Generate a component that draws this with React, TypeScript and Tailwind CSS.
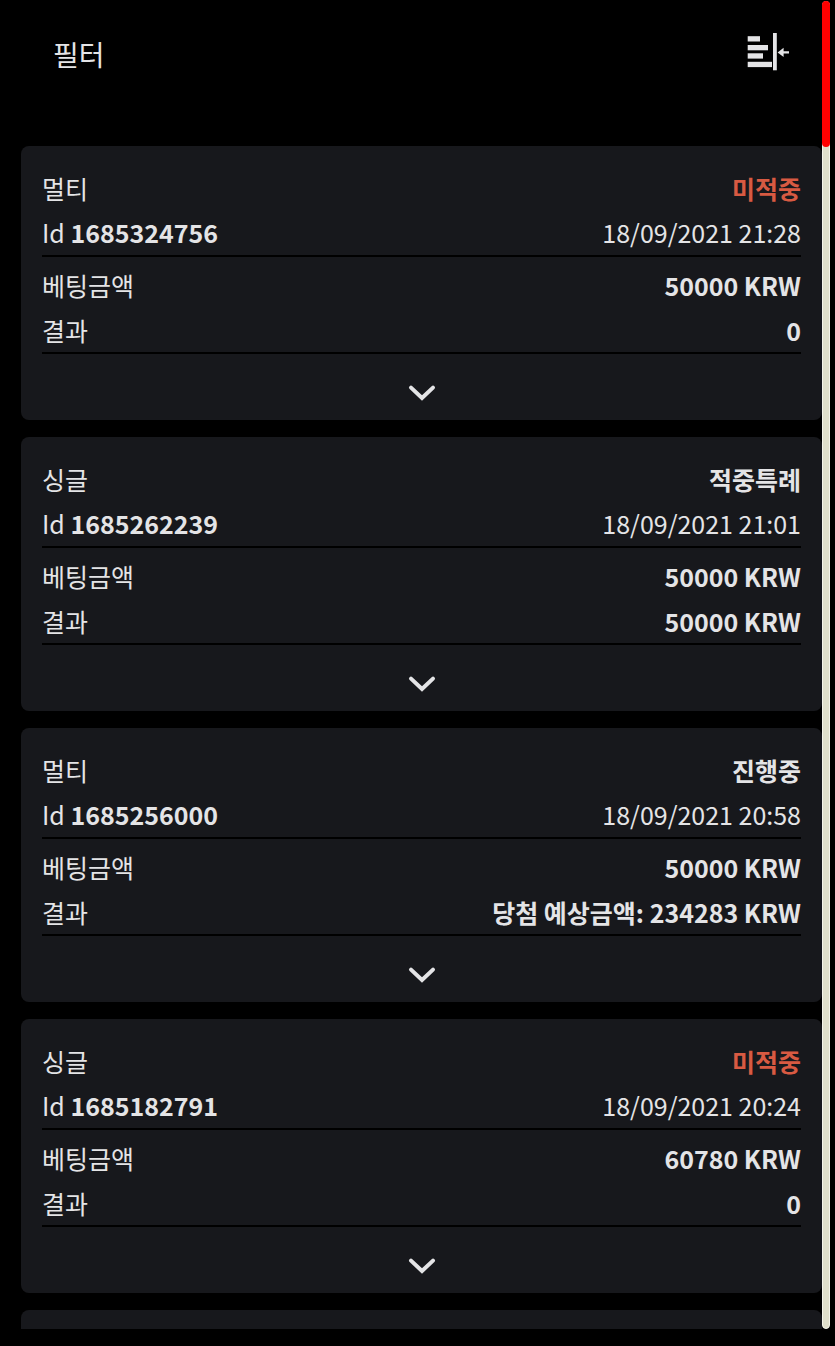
import { useState } from 'react';
import clsx from 'clsx';

type Bet = {
  id: string;
  type: string;
  status: string;
  lost?: boolean;
  date: string;
  stake: string;
  result: string;
};

const bets: Bet[] = [
  { id: '1685324756', type: '멀티', status: '미적중', lost: true, date: '18/09/2021 21:28', stake: '50000 KRW', result: '0' },
  { id: '1685262239', type: '싱글', status: '적중특례', date: '18/09/2021 21:01', stake: '50000 KRW', result: '50000 KRW' },
  { id: '1685256000', type: '멀티', status: '진행중', date: '18/09/2021 20:58', stake: '50000 KRW', result: '당첨 예상금액: 234283 KRW' },
  { id: '1685182791', type: '싱글', status: '미적중', lost: true, date: '18/09/2021 20:24', stake: '60780 KRW', result: '0' },
];

function CollapseIcon() {
  return (
    <svg width="42" height="38" viewBox="0 0 42 38" fill="currentColor" aria-hidden="true">
      <rect x="0.7" y="3.2" width="12.3" height="5.3" />
      <rect x="0.7" y="12" width="20.3" height="5.3" />
      <rect x="0.7" y="20.3" width="15.3" height="5.3" />
      <rect x="0.7" y="28.8" width="24.3" height="5.3" />
      <rect x="26" y="0" width="3.8" height="37.3" />
      <path d="M30.6 19.4 36.6 14.8V18.3H42V20.5H36.6V24Z" />
    </svg>
  );
}

function ChevronIcon() {
  return (
    <svg width="28" height="18" viewBox="0 0 28 18" fill="none" aria-hidden="true">
      <path d="M3 3.6 14 14 25 3.6" stroke="currentColor" strokeWidth="4" strokeLinecap="round" />
    </svg>
  );
}

function BetCard({ bet }: { bet: Bet }) {
  const [open, setOpen] = useState(false);

  return (
    <article className="rounded-lg bg-[#17181c] px-[21px] pt-5">
      <div className="border-b-2 border-black pb-px">
        <div className="flex justify-between">
          <span>{bet.type}</span>
          <strong className={clsx('font-bold', bet.lost && 'text-[#d85a42]')}>{bet.status}</strong>
        </div>
        <div className="flex justify-between">
          <span>
            Id <strong className="font-bold">{bet.id}</strong>
          </span>
          <time>{bet.date}</time>
        </div>
      </div>
      <dl className="flex flex-col gap-px border-b-2 border-black pt-1.5">
        <div className="flex justify-between">
          <dt>베팅금액</dt>
          <dd className="font-bold">{bet.stake}</dd>
        </div>
        <div className="flex justify-between">
          <dt>결과</dt>
          <dd className="font-bold">{bet.result}</dd>
        </div>
      </dl>
      <button
        type="button"
        aria-label="상세 보기"
        aria-expanded={open}
        onClick={() => setOpen(!open)}
        className="flex h-[66px] w-full items-center justify-center pt-3"
      >
        <span className={clsx(open && 'rotate-180')}>
          <ChevronIcon />
        </span>
      </button>
    </article>
  );
}

export default function App() {
  return (
    <div className="flex h-screen bg-black pr-[5px] pb-[17px] pl-[21px] font-['Noto_Sans_CJK_KR',sans-serif] text-[25px] leading-[44px] text-[#e4e4e6]">
      <main className="min-w-0 flex-1 overflow-y-auto [scrollbar-width:none]">
        <header className="flex h-[146px] items-start justify-between pt-8 pr-[33px] pl-8">
          <h1 className="text-[28px] leading-[44px]">필터</h1>
          <button type="button" aria-label="필터 접기" className="flex h-10 items-center">
            <CollapseIcon />
          </button>
        </header>
        <div className="flex flex-col gap-[17px]">
          {bets.map((bet) => (
            <BetCard key={bet.id} bet={bet} />
          ))}
          <div className="h-[274px] shrink-0 rounded-lg bg-[#17181c]" />
        </div>
      </main>
      <div className="mt-px w-2 rounded-full border border-[#f4f4ea] bg-[#dfdfcb]">
        <div className="-m-px h-[11%] rounded-full bg-[#ff0000]" />
      </div>
    </div>
  );
}
